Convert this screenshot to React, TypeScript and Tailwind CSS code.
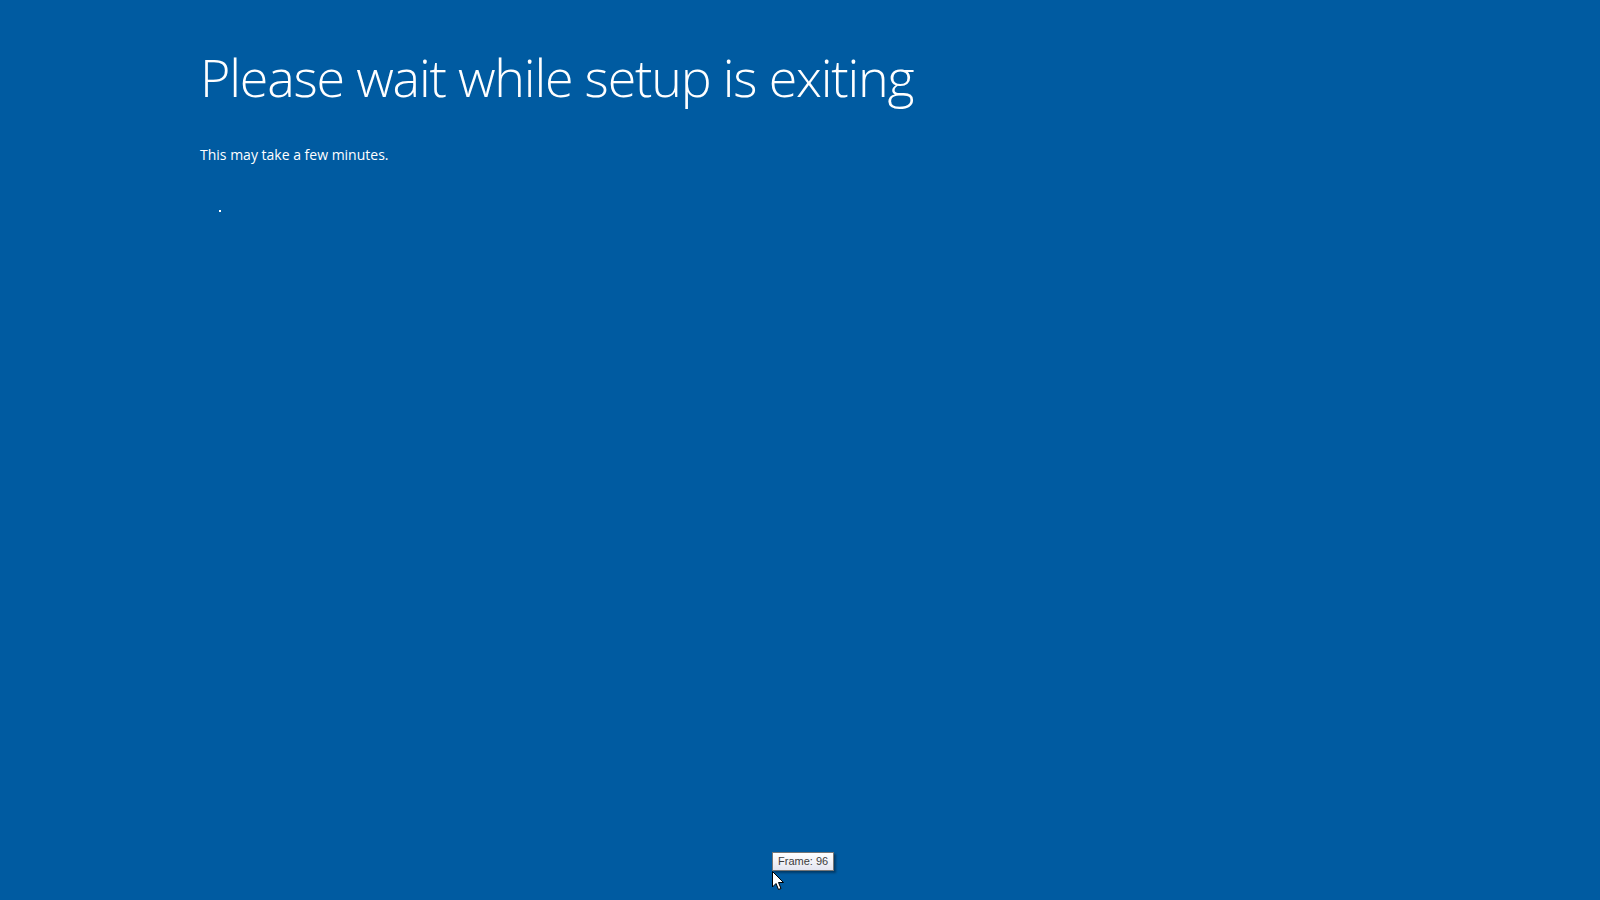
import React from 'react';

const App: React.FC = () => {
  return (
    <div className="relative w-[1600px] h-[900px] overflow-hidden bg-[#005ba1] text-white font-['Open_Sans',sans-serif]">
      <div className="pl-[200px] pt-[42px]">
        <h1 className="text-[52px] font-light leading-[70px] tracking-[-1.2px]">
          Please wait while setup is exiting
        </h1>
        <p className="mt-[33px] text-[14px] leading-[20px]">This may take a few minutes.</p>
        {/* progress dot */}
        <div className="mt-[45px] ml-[19px] w-[2px] h-[2px] bg-white" />
      </div>

      {/* Frame counter tooltip */}
      <div className="absolute left-[772px] top-[852px] h-[19px] px-[5px] flex items-center border border-[#767676] bg-gradient-to-b from-white to-[#e4e5f0] shadow-[2px_2px_2px_rgba(0,0,0,0.35)] text-[11px] text-[#3c3c3c] font-['Liberation_Sans',sans-serif]">
        Frame: 96
      </div>

      {/* mouse cursor */}
      <svg className="absolute left-[772px] top-[871px]" width="13" height="20" viewBox="0 0 13 20">
        <path d="M0.5 0.5 L0.5 16 L4 12.5 L6.5 18.5 L9 17.5 L6.5 11.5 L11.5 11.5 Z" fill="#fff" stroke="#000" strokeWidth="1" strokeLinejoin="round" />
      </svg>
    </div>
  );
};

export default App;
